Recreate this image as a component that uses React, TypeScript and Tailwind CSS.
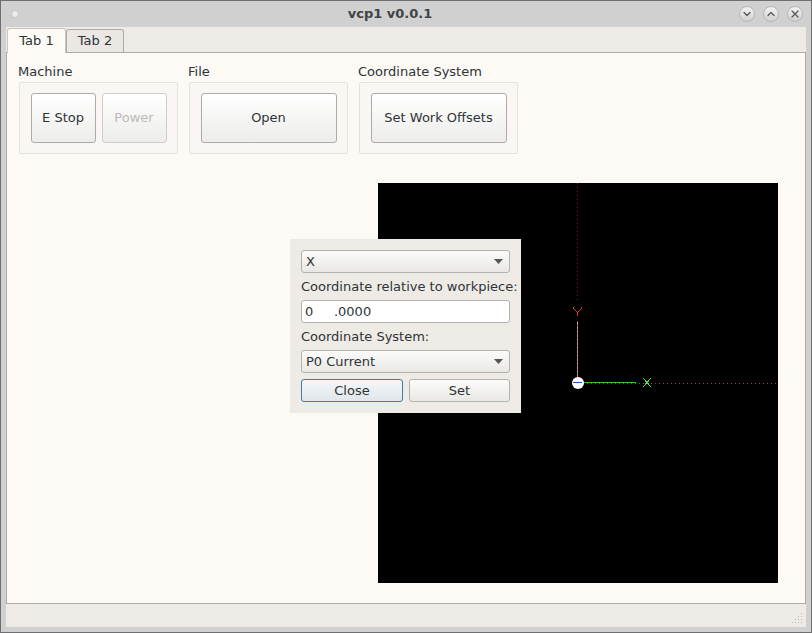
import { ChevronDown, ChevronUp, X } from "lucide-react";

const font = "font-['DejaVu_Sans',sans-serif]";

const WinButton = ({ children }: { children: React.ReactNode }) => (
  <div className="w-[16px] h-[16px] rounded-full border border-[#b5b5b5] bg-gradient-to-b from-[#f4f4f4] to-[#cfcfcf] flex items-center justify-center text-[#555]">
    {children}
  </div>
);

const PushButton = ({ label, w, disabled }: { label: string; w: string; disabled?: boolean }) => (
  <div
    className={`${w} h-[50px] rounded-[3px] border bg-gradient-to-b from-white to-[#ececea] flex items-center justify-center ${
      disabled ? "border-[#d0ccc8] text-[#bdbab7] from-[#f8f6f4] to-[#ecebe8]" : "border-[#aeaaa6] text-[#2e3436]"
    }`}
  >
    {label}
  </div>
);

const Group = ({ title, w, children }: { title: string; w: string; children: React.ReactNode }) => (
  <div className={`${w} flex flex-col`}>
    <div className="h-[18px] leading-[16px] text-[13px] text-[#2e3436] -ml-[1px]">{title}</div>
    <div className="h-[72px] rounded-[2px] border border-[#e6e2de] bg-[#f9f6f3] flex items-center justify-center gap-[6px]">
      {children}
    </div>
  </div>
);

const Combo = ({ label }: { label: string }) => (
  <div className="h-[23px] rounded-[3px] border border-[#b5b1ad] bg-gradient-to-b from-[#fbfbfa] to-[#e9e8e5] flex items-center justify-between pl-[4px] pr-[6px]">
    <span>{label}</span>
    <svg width="9" height="5" viewBox="0 0 9 5">
      <path d="M0 0h9L4.500 5z" fill="#555753" />
    </svg>
  </div>
);

const Canvas = () => (
  <svg width="400" height="400" viewBox="0 0 400 400" className="block bg-black" shapeRendering="crispEdges">
    {/* y axis, dotted part then the tool line */}
    <line x1="199.500" y1="0" x2="199.500" y2="118" stroke="#8a1a1a" strokeWidth="1" strokeDasharray="1 3" />
    <line x1="199.500" y1="138" x2="199.500" y2="194" stroke="#a8a8a8" strokeWidth="1" />
    <line x1="199.500" y1="138" x2="199.500" y2="194" stroke="#e02020" strokeWidth="1" strokeDasharray="1 3" />
    {/* y label */}
    <path d="M195 124l1 2 3 3v4M204 124l-1 2-3 3" stroke="#e03030" fill="none" strokeWidth="1" />
    {/* x axis */}
    <line x1="205" y1="199.500" x2="258" y2="199.500" stroke="#40c040" strokeWidth="1" />
    <line x1="205" y1="200.500" x2="398" y2="200.500" stroke="#e02020" strokeWidth="1" strokeDasharray="1 3" />
    {/* x label */}
    <path d="M265 195l8 9M273 195l-8 9" stroke="#50e050" fill="none" strokeWidth="1" />
    {/* origin */}
    <circle cx="200" cy="200" r="6" fill="#fff" shapeRendering="auto" />
    <line x1="195" y1="199.500" x2="204" y2="199.500" stroke="#3040c0" strokeWidth="1" />
  </svg>
);

export default function App() {
  return (
    <div className={`${font} relative w-[812px] h-[633px] bg-[#d0d0d0] border border-[#6e6e6e] border-b-[#6e6e6e] flex flex-col overflow-hidden text-[13px] text-[#2e3436]`}>
      {/* title bar */}
      <div className="h-[26px] shrink-0 flex items-center justify-between pl-[10px] pr-[10px]">
        <div className="w-[8px] h-[8px] rounded-full bg-[#ececec] border border-[#c4c4c4]" />
        <div className="font-bold text-[13px] text-[#3f4447] ml-[22px]">vcp1 v0.0.1</div>
        <div className="flex gap-[8px] -mr-[2px]">
          <WinButton><ChevronDown size={12} strokeWidth={2.5} /></WinButton>
          <WinButton><ChevronUp size={12} strokeWidth={2.5} /></WinButton>
          <WinButton><X size={12} strokeWidth={2.5} /></WinButton>
        </div>
      </div>

      {/* client area */}
      <div className="mx-[5px] flex-1 flex flex-col bg-[#eeebe7]">
        <div className="h-[25px] shrink-0 flex items-end pl-[1px] relative">
          <div className="w-[59px] h-[25px] -mb-[1px] relative z-10 rounded-t-[3px] border border-b-0 border-[#c9c5c1] bg-[#fdf9f5] flex items-center justify-center">Tab 1</div>
          <div className="w-[58px] h-[23px] rounded-t-[3px] border border-b-0 border-[#aeaaa6] bg-[#ebe8e4] flex items-center justify-center">Tab 2</div>
        </div>
        <div className="h-[552px] shrink-0 border border-[#aeaaa6] bg-[#fdf9f5] flex flex-col">
          <div className="flex pl-[12px] pt-[11px] gap-[11px]">
            <Group title="Machine" w="w-[159px]">
              <PushButton label="E Stop" w="w-[65px]" />
              <PushButton label="Power" w="w-[65px]" disabled />
            </Group>
            <Group title="File" w="w-[159px]">
              <PushButton label="Open" w="w-[136px]" />
            </Group>
            <Group title="Coordinate System" w="w-[159px]">
              <PushButton label="Set Work Offsets" w="w-[136px]" />
            </Group>
          </div>
          <div className="ml-[371px] mt-[29px]">
            <Canvas />
          </div>
        </div>
        <div className="flex-1 relative">
          <svg width="12" height="12" viewBox="0 0 12 12" className="absolute right-[2px] bottom-[2px]" fill="#b8b5b1">
            <rect x="9" y="0" width="1" height="1" />
            <rect x="6" y="3" width="1" height="1" />
            <rect x="9" y="3" width="1" height="1" />
            <rect x="3" y="6" width="1" height="1" />
            <rect x="6" y="6" width="1" height="1" />
            <rect x="9" y="6" width="1" height="1" />
            <rect x="0" y="9" width="1" height="1" />
            <rect x="3" y="9" width="1" height="1" />
            <rect x="6" y="9" width="1" height="1" />
            <rect x="9" y="9" width="1" height="1" />
          </svg>
        </div>
      </div>
      <div className="h-[5px] shrink-0" />

      {/* dialog over the canvas */}
      <div className="absolute left-[289px] top-[238px] w-[231px] h-[174px] bg-[#eeebe7] px-[11px] pt-[11px] flex flex-col">
        <Combo label="X" />
        <div className="h-[27px] leading-[27px] whitespace-nowrap">Coordinate relative to workpiece:</div>
        <div className="h-[23px] rounded-[3px] border border-[#b5b1ad] bg-white flex items-center pl-[3px] whitespace-pre">0     .0000</div>
        <div className="h-[27px] leading-[27px]">Coordinate System:</div>
        <Combo label="P0 Current" />
        <div className="flex gap-[6px] mt-[6px]">
          <div className="w-[102px] h-[23px] rounded-[3px] border border-[#3d7ea6] bg-gradient-to-b from-[#f4f7f9] to-[#dfe6ea] flex items-center justify-center">Close</div>
          <div className="w-[101px] h-[23px] rounded-[3px] border border-[#b5b1ad] bg-gradient-to-b from-[#fbfbfa] to-[#e9e8e5] flex items-center justify-center">Set</div>
        </div>
      </div>
    </div>
  );
}
